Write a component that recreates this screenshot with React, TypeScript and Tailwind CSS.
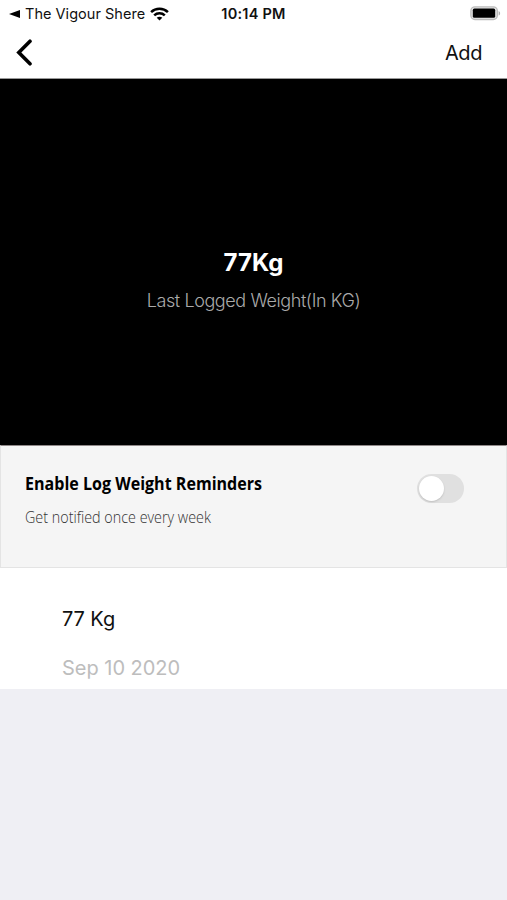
import { useState } from 'react'

interface LogEntry {
  weight: number
  date: string
}

const ENTRIES: LogEntry[] = [{ weight: 77, date: 'Sep 10 2020' }]

function WifiIcon() {
  return (
    <svg viewBox="0 0 19 14" className="h-[14px] w-[19px]" fill="none" stroke="#000" strokeWidth="2.5">
      <path d="M1.1 5.1C5.7 0.6 13.3 0.6 17.9 5.1" />
      <path d="M4.2 8.4C7.1 5.6 11.9 5.6 14.8 8.4" />
      <path d="M9.5 13.6L6.7 10.8C8.3 9.3 10.7 9.3 12.3 10.8Z" fill="#000" stroke="none" />
    </svg>
  )
}

function BatteryIcon() {
  return (
    <svg viewBox="0 0 31 15" className="h-[15px] w-[31px]">
      <rect x="0.9" y="0.9" width="26.4" height="12.6" rx="4" fill="#e8e8e8" stroke="#bcbcbc" strokeWidth="1.4" />
      <rect x="2.8" y="2.6" width="22.4" height="9.2" rx="1.6" fill="#000" />
      <path d="M28.6 5V9.6C30.6 8.8 30.6 5.8 28.6 5Z" fill="#b0b0b0" />
    </svg>
  )
}

function StatusBar() {
  return (
    <div className="grid h-7 grid-cols-[1fr_auto_1fr] items-center leading-none text-[#111]">
      <div className="flex items-center pl-[9px]">
        <svg viewBox="0 0 11 8" className="h-2 w-[11px]">
          <path d="M0 4L11 0V8Z" fill="#000" />
        </svg>
        <span className="ml-[5px] w-[125px] whitespace-nowrap text-[14.5px] tracking-[0.03px]">The Vigour Shere</span>
        <WifiIcon />
      </div>
      <span className="text-[14.5px] font-semibold tracking-[0.25px]">10:14 PM</span>
      <div className="flex justify-end pr-[6px] pb-px">
        <BatteryIcon />
      </div>
    </div>
  )
}

function NavBar() {
  return (
    <div className="flex h-[51px] items-center justify-between border-b border-[#999] pr-[25px] pl-4">
      <button aria-label="Back">
        <svg viewBox="0 0 17 27" className="mb-px h-[27px] w-[17px]" fill="none" stroke="#000" strokeWidth="3.6">
          <path d="M14 2.2L2.8 13.5L14 24.8" strokeLinecap="round" />
        </svg>
      </button>
      <button className="text-xl leading-none tracking-[-0.4px] text-[#111]">Add</button>
    </div>
  )
}

function Toggle({ on, onChange }: { on: boolean; onChange: (v: boolean) => void }) {
  return (
    <button
      role="switch"
      aria-checked={on}
      aria-label="Enable Log Weight Reminders"
      onClick={() => onChange(!on)}
      className={`flex h-[29px] w-[47px] items-center rounded-full px-[2px] ${on ? 'justify-end bg-green-500' : 'bg-[#e0e0e0]'}`}
    >
      <span className="size-[25px] rounded-full bg-white shadow-[0_1px_2px_rgba(0,0,0,0.15)]" />
    </button>
  )
}

export default function App() {
  const [reminders, setReminders] = useState(false)

  return (
    <div className="flex h-screen flex-col overflow-hidden bg-[#efeff4] font-['Inter',sans-serif]">
      <header className="bg-white">
        <StatusBar />
        <NavBar />
      </header>

      <section className="flex h-[366px] flex-col items-center bg-black pt-[169px]">
        <div className="text-2xl leading-[30px] font-bold text-white">77Kg</div>
        <div className="mt-[9px] text-lg leading-7 font-light tracking-[-0.41px] text-[#aaa]">
          Last Logged Weight(In KG)
        </div>
      </section>

      {/* Reminder setting */}
      <section className="flex h-[123px] justify-between border border-[#e4e4e4] border-t-[#8f8888] bg-[#f5f5f5] pr-[42px] pl-6 font-['Open_Sans',sans-serif]">
        <div className="pt-[25px] whitespace-nowrap">
          <div className="origin-left scale-x-[0.917] text-[17.5px] leading-6 font-bold text-black">
            Enable Log Weight Reminders
          </div>
          <div className="mt-[10px] origin-left scale-x-[0.925] text-[15.5px] leading-6 font-light text-[#333]">
            Get notified once every week
          </div>
        </div>
        <div className="pt-[28px]">
          <Toggle on={reminders} onChange={setReminders} />
        </div>
      </section>

      {/* Logged weights */}
      {ENTRIES.map(e => (
        <div key={e.date} className="h-[121px] bg-white pt-[37px] pl-[62px] text-xl">
          <div className="leading-7 tracking-[-0.1px] text-[#111]">{e.weight} Kg</div>
          <div className="mt-[21px] leading-7 tracking-[-0.02px] text-[#bdbdbd]">{e.date}</div>
        </div>
      ))}
    </div>
  )
}
